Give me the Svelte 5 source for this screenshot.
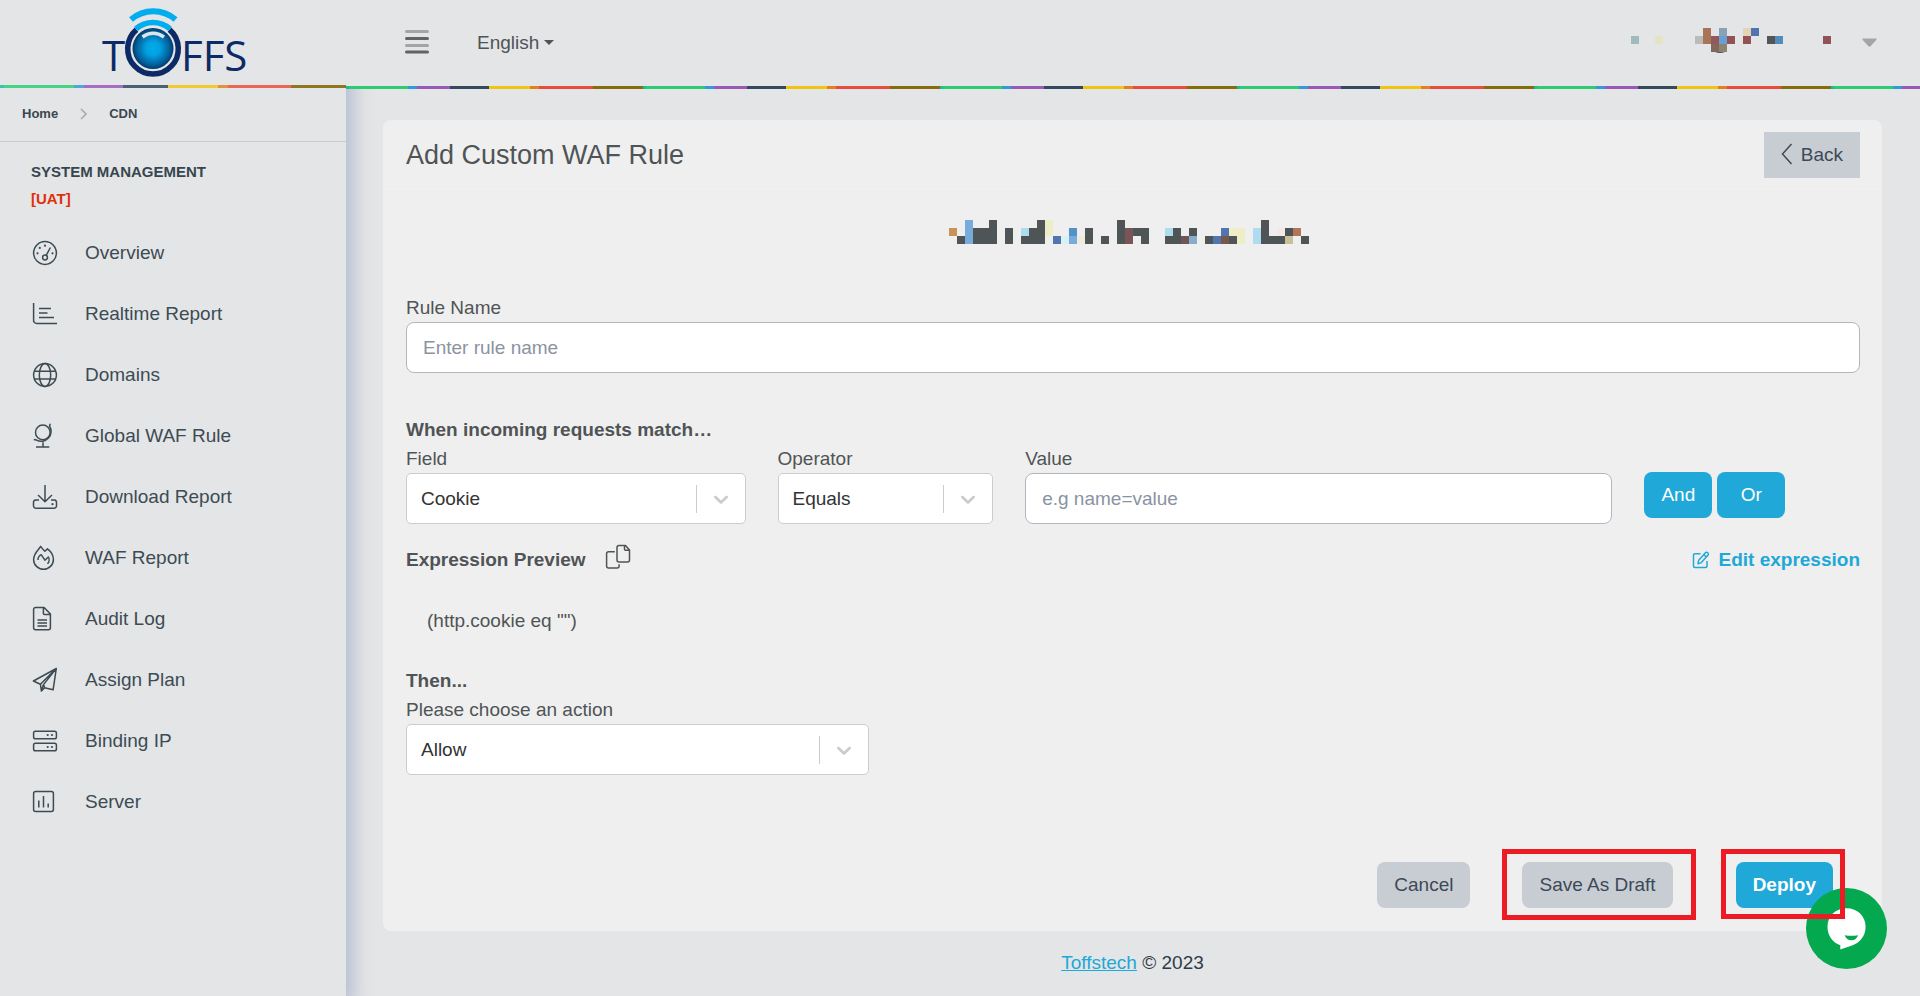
<script>
  const menu = [
    { label: 'Overview', icon: 'speed' },
    { label: 'Realtime Report', icon: 'chart' },
    { label: 'Domains', icon: 'globe' },
    { label: 'Global WAF Rule', icon: 'stand' },
    { label: 'Download Report', icon: 'download' },
    { label: 'WAF Report', icon: 'fire' },
    { label: 'Audit Log', icon: 'doc' },
    { label: 'Assign Plan', icon: 'plane' },
    { label: 'Binding IP', icon: 'storage' },
    { label: 'Server', icon: 'bars' }
  ];

  const D = '#4f5456', B = '#76abdb', L = '#addcee', Y = '#eeeec6', N = '#5175b0';
  // [column, row, height in cells, colour]
  const domainCells = [
    [0, 1, 1, '#c89456'], [1, 2, 1, D], [2, 0, 3, B], [3, 1, 2, D], [4, 1, 2, D], [5, 0, 3, D],
    [7, 1, 2, D], [9, 1, 1, L], [9, 2, 1, D], [10, 1, 2, D], [11, 0, 3, D], [12, 0, 2, Y],
    [13, 2, 1, N], [14, 2, 1, '#dbf0f3'], [15, 1, 1, '#5292c8'], [15, 2, 1, B], [16, 2, 1, '#f0ecdb'],
    [17, 1, 2, D], [19, 2, 1, D], [21, 0, 3, D], [22, 1, 2, '#7a5558'], [23, 1, 1, D], [24, 1, 2, D],
    [27, 1, 1, L], [27, 2, 1, D], [28, 1, 2, D], [29, 2, 1, '#6b5856'], [30, 1, 1, D], [30, 2, 1, '#87adc8'],
    [32, 2, 1, D], [33, 2, 1, N], [34, 1, 1, N], [34, 2, 1, '#75594f'], [35, 1, 1, '#f0eec8'], [35, 2, 1, D],
    [36, 1, 2, Y], [38, 1, 2, L], [39, 0, 3, D], [40, 2, 1, D], [41, 1, 1, '#f1eae6'], [41, 2, 1, D],
    [42, 1, 1, D], [42, 2, 1, '#c6c09d'], [43, 1, 1, '#b07656'], [44, 2, 1, D]
  ];
  const userCells = [
    [0, 1, 1, '#9fbabb'], [3, 1, 1, '#e5e5c4'], [8, 1, 1, '#bbbbbc'], [9, 0, 2, '#a87456'],
    [10, 1, 1, '#935859'], [11, 0, 1, '#87a3b6'], [11, 1, 1, '#68a0d4'], [12, 1, 1, '#935356'],
    [10, 2, 1, '#83675b'], [11, 2, 1, '#8e8570'], [14, 0, 1, '#e5d3b6'], [15, 0, 1, N],
    [14, 1, 1, '#935356'], [17, 1, 1, '#555556'], [18, 1, 1, '#528cbc'], [24, 1, 1, '#935356']
  ];

  let ruleName = $state('');
  let field = $state('Cookie');
  let operator = $state('Equals');
  let value = $state('');
  let action = $state('Allow');
</script>

{#snippet caret()}
  <span class="indicator" aria-hidden="true">
    <svg width="24" height="24" viewBox="0 0 20 20"><path fill="#cccccc" d="M4.516 7.548c0.436-0.446 1.043-0.481 1.576 0l3.908 3.747 3.908-3.747c0.533-0.481 1.141-0.446 1.574 0 0.436 0.445 0.408 1.197 0 1.615-0.406 0.418-4.695 4.502-4.695 4.502-0.217 0.223-0.502 0.335-0.787 0.335s-0.57-0.112-0.789-0.335c0 0-4.287-4.084-4.695-4.502s-0.436-1.17 0-1.615z" /></svg>
  </span>
{/snippet}

{#snippet cells(list)}
  {#each list as [c, r, h, fill]}
    <rect x={c * 8} y={r * 8} width="8" height={h * 8} {fill} />
  {/each}
{/snippet}

<div class="layout">
  <aside class="sidebar">
    <a class="brand" href="#home" aria-label="Toffs">
      <svg width="166" height="85" viewBox="90 0 166 85">
        <defs>
          <radialGradient id="orb" cx="50%" cy="50%" r="50%">
            <stop offset="0" stop-color="#00adef" />
            <stop offset="0.35" stop-color="#02a0e0" />
            <stop offset="0.8" stop-color="#045f9a" />
            <stop offset="1" stop-color="#043a6c" />
          </radialGradient>
        </defs>
        <text class="mark" x="102" y="71">T</text>
        <text class="mark" x="181" y="71">FFS</text>
        <path d="M136.500 29.600 A25.300 25.300 0 1 0 169.500 29.600" fill="none" stroke="#0c2a66" stroke-width="5.500" />
        <path d="M136 28.900 A26 26 0 0 1 170 28.900" fill="none" stroke="#00adef" stroke-width="5.500" />
        <path d="M131 19.500 A34 34 0 0 1 175.500 19.500" fill="none" stroke="#00adef" stroke-width="6" />
        <circle cx="153" cy="48.500" r="20.500" fill="url(#orb)" />
        <path d="M142.500 37 Q153 29.500 164 37" fill="none" stroke="#d9e6ee" stroke-width="3.500" />
      </svg>
    </a>
    <div class="stripe side"></div>
    <nav class="crumbs" aria-label="Breadcrumb">
      <a href="#home">Home</a>
      <svg width="7" height="12" viewBox="0 0 7 12"><path d="M1 1l5 5-5 5" fill="none" stroke="#a9abad" stroke-width="1.600" /></svg>
      <a href="#cdn">CDN</a>
    </nav>
    <div class="section">
      <div>SYSTEM MANAGEMENT</div>
      <div class="env">[UAT]</div>
    </div>
    <nav class="menu" aria-label="Main">
      {#each menu as item}
        <a href="#{item.icon}">
          <svg class="ico" width="26" height="26" viewBox="0 0 26 26">
            {#if item.icon === 'speed'}
              <circle cx="13" cy="13" r="11.400" />
              <circle cx="13" cy="17.500" r="2.400" />
              <path d="M14.200 15.300L18.400 7.500" />
              <g class="solid"><circle cx="5.500" cy="13.300" r="1.100" /><circle cx="7.800" cy="7.900" r="1.100" /><circle cx="13" cy="5.700" r="1.100" /><circle cx="20.500" cy="13.300" r="1.100" /></g>
            {:else if item.icon === 'chart'}
              <path d="M1.600 2v17.400a3 3 0 0 0 3 3H25M7 7.500h12M7 12h8.500M7 16.500h15" />
            {:else if item.icon === 'globe'}
              <circle cx="13" cy="13" r="11.400" />
              <ellipse cx="13" cy="13" rx="5.700" ry="11.400" />
              <path d="M2.500 9.300h21M2.500 16.900h21" />
            {:else if item.icon === 'stand'}
              <circle cx="10.800" cy="9.400" r="7.300" />
              <path d="M18.300 .800l-.800 2.200a9.900 9.900 0 0 1-13 14.100l-2.700-.600M11 19.300v4.500M4 23.900h13.300" />
            {:else if item.icon === 'download'}
              <path d="M13 1v16M6 11l7 6.700L20 11M7 16H3.600a2.500 2.500 0 0 0-2.100 2.500v3.300a2.500 2.500 0 0 0 2.500 2.500h18a2.500 2.500 0 0 0 2.500-2.500v-3.300a2.500 2.500 0 0 0-2.100-2.500H19" />
              <circle class="solid" cx="20.500" cy="20.200" r="1.100" />
            {:else if item.icon === 'fire'}
              <path d="M8.700 1.400C6.700 4.600 1.600 8.400 1.600 14.400a9.900 9.900 0 0 0 19.800 0c0-4.300-2.400-7.800-5.900-10.500l-2.700 2.400c-1.500-1.400-2.900-3.100-4.100-4.900z" />
              <path d="M6 15c-.300-3 2-5 3.200-5.300l3.700 5.500 3.500-3.200c1 1.900 1.100 5-.900 6.700" />
            {:else if item.icon === 'doc'}
              <path d="M3.600 1.500h8.500l6.300 6.600v13.600a2 2 0 0 1-2 2H3.600a2 2 0 0 1-2-2V3.500a2 2 0 0 1 2-2zM11.400 1.700v5.700a1 1 0 0 0 1 1h6M5.500 14h9.500M5.500 17h9.500M5.500 20h9.500" />
            {:else if item.icon === 'plane'}
              <path d="M24.300 1.500L1.400 14l7 3.200 1 6.900 3.200-3.400 8.500 2.100zM24 1.700L8.400 17.200M24 1.700L11.500 17.600l-2 6M11.500 17.600l1.200 3.200" />
            {:else if item.icon === 'storage'}
              <rect x="1.600" y="3.300" width="22.800" height="7.400" rx="1.800" />
              <rect x="1.600" y="15.300" width="22.800" height="7.400" rx="1.800" />
              <g class="solid"><circle cx="15.700" cy="7" r="1.100" /><circle cx="20" cy="7" r="1.100" /><circle cx="15.700" cy="19" r="1.100" /><circle cx="20" cy="19" r="1.100" /></g>
            {:else}
              <rect x="1.600" y="2.600" width="19.800" height="19.800" rx="2" />
              <path d="M6.800 11.500v7M11.500 7v11.500M16.200 14.500v4" />
            {/if}
          </svg>
          <span>{item.label}</span>
        </a>
      {/each}
    </nav>
  </aside>

  <div class="content">
    <header class="topbar">
      <button class="burger" aria-label="Toggle menu">
        <svg width="24" height="24" viewBox="0 0 24 24">
          <g fill="#a3a4a4"><rect width="24" height="3" rx="1.500" /><rect y="14" width="24" height="3" rx="1.500" /></g>
          <g fill="#636362"><rect y="7" width="24" height="3" rx="1.500" /><rect y="20.500" width="24" height="3" rx="1.500" /></g>
        </svg>
      </button>
      <button class="lang">English<svg width="10" height="5" viewBox="0 0 10 5"><path d="M0 0h10L5 5z" fill="#4f5456" /></svg></button>
      <button class="user" aria-label="Account">
        <svg width="200" height="28" viewBox="0 0 200 28">
          {@render cells(userCells)}
          <path d="M84 24h10q-5 2-10 0z" fill="#4a4a58" />
        </svg>
        <svg width="15" height="9" viewBox="0 0 15 9"><path d="M1 .500h13q1 .500.300 1.500L8.500 8.300q-1 .800-2 0L.700 2Q0 1 1 .500z" fill="#a4a5a6" /></svg>
      </button>
    </header>
    <div class="stripe wide"></div>

    <main>
      <section class="card">
        <div class="card-head">
          <h1>Add Custom WAF Rule</h1>
          <button class="btn back"><svg width="12" height="22" viewBox="0 0 12 22"><path d="M10.500 1L1.500 11l9 10" fill="none" stroke="currentColor" stroke-width="1.500" /></svg>Back</button>
        </div>
        <form class="card-body" onsubmit={(e) => e.preventDefault()}>
          <svg class="domain" width="368" height="24" viewBox="0 0 368 24" aria-hidden="true">{@render cells(domainCells)}</svg>

          <label for="rule-name">Rule Name</label>
          <input id="rule-name" type="text" placeholder="Enter rule name" bind:value={ruleName} />

          <h2>When incoming requests match…</h2>
          <div class="grid">
            <div class="span3">
              <label for="field">Field</label>
              <div class="pick">
                <select id="field" bind:value={field}><option>Cookie</option></select>
                {@render caret()}
              </div>
            </div>
            <div class="span2">
              <label for="operator">Operator</label>
              <div class="pick">
                <select id="operator" bind:value={operator}><option>Equals</option></select>
                {@render caret()}
              </div>
            </div>
            <div class="span5">
              <label for="value">Value</label>
              <input id="value" type="text" placeholder="e.g name=value" bind:value />
            </div>
            <div class="span2 joins">
              <button type="button" class="btn primary">And</button>
              <button type="button" class="btn primary">Or</button>
            </div>
          </div>

          <div class="preview">
            <strong>Expression Preview</strong>
            <button type="button" class="copy" aria-label="Copy expression">
              <svg width="26" height="26" viewBox="0 0 26 26" fill="none" stroke="#4f5456" stroke-width="1.500">
                <path d="M14 1.500h6.500l4 4.500v10a2 2 0 0 1-2 2H14a2 2 0 0 1-2-2V3.500a2 2 0 0 1 2-2zM19.500 1.700v3.500a1 1 0 0 0 1 1h3.800" />
                <path d="M9.800 7.700H3.600a2 2 0 0 0-2 2V22a2 2 0 0 0 2 2h8.500a2 2 0 0 0 2-2v-1.700" />
              </svg>
            </button>
            <a class="edit" href="#edit">
              <svg width="18" height="18" viewBox="0 0 18 18" fill="none" stroke="currentColor" stroke-width="1.500" stroke-linejoin="round">
                <path d="M8.500 2.700H3a1.500 1.500 0 0 0-1.500 1.500V15A1.500 1.500 0 0 0 3 16.500h10.500A1.500 1.500 0 0 0 15 15V10" />
                <path d="M13.200 1.900a1.700 1.700 0 0 1 2.700 2.400L9.300 11.600l-3.300 1.100.700-3.500zM11.700 3.500l2.700 2.500" />
              </svg>
              Edit expression
            </a>
          </div>
          <p class="expr">(http.cookie eq "")</p>

          <h3>Then...</h3>
          <div class="grid">
            <div class="span4">
              <label for="action">Please choose an action</label>
              <div class="pick">
                <select id="action" bind:value={action}><option>Allow</option></select>
                {@render caret()}
              </div>
            </div>
          </div>

          <div class="actions">
            <button type="button" class="btn">Cancel</button>
            <span class="marked draft"><button type="button" class="btn">Save As Draft</button></span>
            <span class="marked deploy"><button type="submit" class="btn primary">Deploy</button></span>
          </div>
        </form>
      </section>
    </main>
    <footer><a href="#toffstech">Toffstech</a> © 2023</footer>
  </div>

  <button class="chat" aria-label="Open chat">
    <svg width="81" height="81" viewBox="0 0 81 81">
      <circle cx="40.500" cy="40.500" r="40.500" fill="#04a84e" />
      <path d="M40.500 20.300C51.500 20.300 59.600 28.300 59.600 38.700C59.600 48 54 54.500 46 57.500L34.300 61.500V57.300C26.500 54.500 21.500 47.500 21.500 38.700C21.500 28.300 29.500 20.300 40.500 20.300Z" fill="#fff" />
      <path d="M38.700 47.200Q45.500 48.200 52 47.200Q50.500 52.300 45.300 52.300Q40.500 52.300 38.700 47.200Z" fill="#04a84e" />
    </svg>
  </button>
</div>

<style>
  :global(body) {
    background: #e4e5e6;
    font-family: "Liberation Sans", Arial, sans-serif;
    font-size: 19px;
    line-height: 29px;
    color: #4f5456;
  }
  .layout { display: flex; min-height: 100vh; }
  button, input, select { font: inherit; box-sizing: border-box; margin: 0; }
  button { cursor: pointer; border: 0; background: none; padding: 0; color: inherit; }
  svg { display: block; flex: none; }

  .sidebar {
    flex: none;
    width: 346px;
    background: #e4e5e6;
    box-shadow: 6px 12px 20px #afb9cf;
  }
  .brand { display: flex; justify-content: center; }
  .mark { font-family: "Open Sans", sans-serif; font-size: 42px; fill: #0c2a66; }
  .stripe { height: 3px; }
  .side {
    background: linear-gradient(to right, #35c4ac 4px, #48d285 4px 74px, #50a5df 74px 84px, #a66ec2 84px 123px, #4c6073 123px 168px, #f0ca32 168px 218px, #e6913e 218px 228px, #e96658 228px 291px, #8f751f 291px);
  }
  .wide {
    position: relative;
    background: repeating-linear-gradient(to right, #1abc9c 0 3px, #2ecc71 3px 62px, #3498db 62px 71px, #9b59b6 71px 104px, #34495e 104px 143px, #f1c40f 143px 184px, #e67e22 184px 193px, #e74c3c 193px 247px, #876c0c 247px 297px);
  }
  .crumbs {
    display: flex;
    align-items: center;
    gap: 22px;
    height: 54px;
    box-sizing: border-box;
    padding: 0 22px 2px;
    border-bottom: 1px solid #c8cacc;
    font-size: 13px;
    font-weight: 700;
  }
  .crumbs a { color: #3a4750; text-decoration: none; }
  .section {
    padding: 16px 31px 10px;
    font-size: 15px;
    line-height: 27px;
    font-weight: 700;
    color: #36464f;
  }
  .env { color: #e0300c; }
  .menu a {
    display: flex;
    align-items: center;
    gap: 27px;
    height: 61px;
    padding-left: 32px;
    color: #3c4b54;
    text-decoration: none;
  }
  .ico { fill: none; stroke: #3c4b54; stroke-width: 1.5; stroke-linejoin: round; }
  .solid { fill: #3c4b54; stroke: none; }

  .content { flex: 1; min-width: 0; display: flex; flex-direction: column; }
  .topbar {
    position: relative;
    display: flex;
    align-items: center;
    height: 86px;
    box-sizing: border-box;
    padding: 0 43px 2px 59px;
    background: #e4e5e6;
  }
  .lang { display: flex; align-items: center; gap: 5px; margin-left: 48px; }
  .user { display: flex; align-items: center; gap: 31px; margin-left: auto; }

  main { padding: 31px 38px 0 37px; }
  .card { background: #efefef; border-radius: 8px; }
  .card-head {
    display: flex;
    align-items: center;
    justify-content: space-between;
    padding: 12px 22px 11px 23px;
    border-bottom: 1px solid #f2f2f2;
  }
  h1 { margin: 0; font-size: 27px; font-weight: 400; }
  .card-body { padding: 30px 22px 23px 23px; }
  .domain { margin: 0 auto 49px; }
  label { display: block; }
  h2, h3 { margin: 42px 0 0; font-size: 19px; line-height: 29px; }
  h3 { margin-top: 32px; line-height: 28px; }
  input, select {
    display: block;
    width: 100%;
    height: 51px;
    background: #fff;
    border: 1px solid #b1b7c1;
    border-radius: 8px;
    padding: 0 16px;
    color: #333333;
  }
  input::placeholder { color: #8a93a2; opacity: 1; }
  select {
    appearance: none;
    border-color: #cccccc;
    border-radius: 5px;
    padding: 0 60px 0 14px;
  }
  .pick { display: grid; align-items: center; }
  .pick > :global(*) { grid-area: 1 / 1; }
  .indicator {
    justify-self: end;
    display: flex;
    align-items: center;
    height: 28px;
    padding: 0 13px 0 12px;
    border-left: 1px solid #cccccc;
    pointer-events: none;
  }
  .grid { display: grid; grid-template-columns: repeat(12, minmax(0, 1fr)); column-gap: 32px; }
  .span2 { grid-column: span 2; }
  .span3 { grid-column: span 3; }
  .span4 { grid-column: span 4; }
  .span5 { grid-column: span 5; }
  .joins { display: flex; gap: 5px; padding-top: 28px; }
  .joins .btn { min-width: 68px; }
  .btn {
    display: flex;
    align-items: center;
    justify-content: center;
    height: 46px;
    padding: 0 17px 2px;
    border-radius: 8px;
    background: #c8cdd4;
    color: #3c4956;
    white-space: nowrap;
  }
  .primary { background: #20a8d8; color: #fff; }
  .back { gap: 8px; border-radius: 0; }
  .preview { display: flex; align-items: center; margin-top: 21px; height: 29px; }
  .copy { margin: 0 0 6px 19px; }
  .edit {
    display: flex;
    align-items: center;
    gap: 9px;
    margin-left: auto;
    color: #20a8d8;
    font-weight: 700;
    text-decoration: none;
  }
  .expr { margin: 32px 0 0; padding-left: 21px; }
  .actions { display: flex; justify-content: flex-end; margin-top: 87px; padding-right: 27px; }
  .marked { position: relative; margin-left: 52px; }
  .marked::after {
    content: "";
    position: absolute;
    z-index: 3;
    inset: -13px -23px -12px -20px;
    border: 5px solid #ed1c24;
    pointer-events: none;
  }
  .deploy { margin-left: 63px; font-weight: 700; }
  .deploy::after { inset: -13px -12px -11px -15px; }
  footer { padding: 17px 38px 19px 37px; text-align: center; color: #2f3b47; }
  footer a { color: #20a8d8; }
  .chat { position: fixed; z-index: 2; right: 33px; bottom: 27px; }
</style>
